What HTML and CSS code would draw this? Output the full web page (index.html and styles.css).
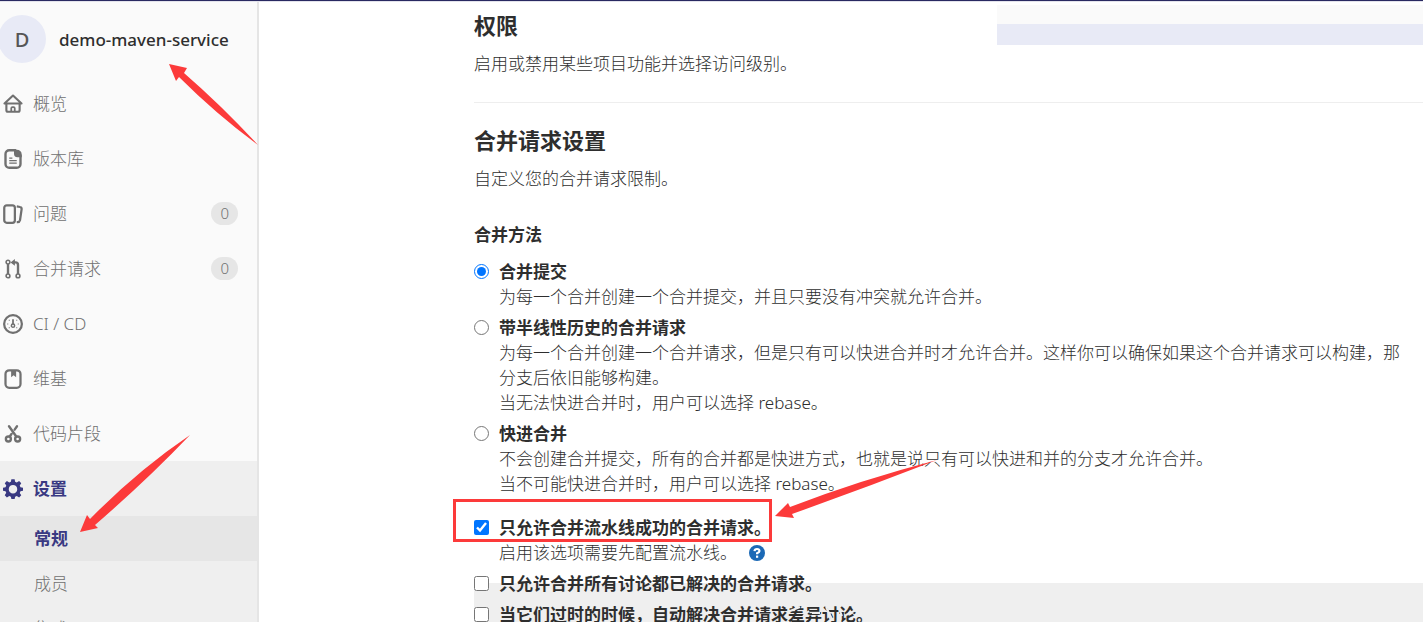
FILE: index.html
```html
<!DOCTYPE html>
<html lang="zh-CN">
<head>
<meta charset="utf-8">
<title>demo-maven-service · 设置</title>
<link rel="stylesheet" href="styles.css">
</head>
<body>
<header class="topbar"></header>
<div class="page">
  <aside class="sidebar">
    <a class="project" href="#"><span class="avatar">D</span><span class="project-name">demo-maven-service</span></a>
    <nav>
      <ul class="menu">
        <li><a class="item" href="#"><svg class="icon" viewBox="0 0 16 16"><path fill="none" stroke="currentColor" stroke-width="1.700" stroke-linejoin="round" d="M8 1.200 1.200 7.600h13.600zM2.700 7.800V13a1.200 1.200 0 0 0 1.200 1.200h8.200a1.200 1.200 0 0 0 1.200-1.200V7.800"/><path fill="none" stroke="currentColor" stroke-width="1.400" d="M6.600 14v-2.600a1 1 0 0 1 1-1h.8a1 1 0 0 1 1 1V14"/></svg><span>概览</span></a></li>
        <li><a class="item" href="#"><svg class="icon" viewBox="0 0 16 16"><path fill="none" stroke="currentColor" stroke-width="1.900" d="M5 1h4.800L14 5.200V12a3 3 0 0 1-3 3H5a3 3 0 0 1-3-3V4a3 3 0 0 1 3-3z"/><path d="M8.800.5H11A4 4 0 0 1 15 4.500v2h-3.500A2.700 2.700 0 0 1 8.800 3.800z"/><path d="M5 6.700h2.500v1H5zm0 2h6v1H5zm0 2h6v1H5z"/></svg><span>版本库</span></a></li>
        <li><a class="item" href="#"><svg class="icon" viewBox="0 0 16 16"><path fill="none" stroke="currentColor" stroke-width="1.800" d="M3 1h4.500a2 2 0 0 1 2 2v10a2 2 0 0 1-2 2H3a2 2 0 0 1-2-2V3a2 2 0 0 1 2-2zM11 1.900l2.600.5a1.500 1.500 0 0 1 1.300 1.700L13.600 13a2 2 0 0 1-2 1.500H11"/></svg><span>问题</span><span class="count">0</span></a></li>
        <li><a class="item" href="#"><svg class="icon" viewBox="0 0 16 16"><g fill="none" stroke="currentColor"><g stroke-width="1.300"><circle cx="4" cy="2.500" r="1.500"/><circle cx="4" cy="13.500" r="1.500"/><circle cx="12" cy="13.500" r="1.500"/></g><path stroke-width="1.900" d="M4 4v8M8 2.700h2q2 0 2 2V12"/></g><path d="M6 2.700 9.500 0v5.400z"/></svg><span>合并请求</span><span class="count">0</span></a></li>
        <li><a class="item" href="#"><svg class="icon" viewBox="0 0 16 16"><circle cx="8" cy="8" r="7.100" fill="none" stroke="currentColor" stroke-width="1.800"/><circle cx="8" cy="9.300" r="1.300" fill="none" stroke="currentColor" stroke-width="1.200"/><path d="M7.300 4.200h1.400v4H7.300zM3.400 7.600h.8v.8h-.8zm8.400 0h.8v.8h-.8zM4.600 4.600h.8v.8h-.8zm6 0h.8v.8h-.8zM4.600 10.600h.8v.8h-.8zm6 0h.8v.8h-.8z"/></svg><span>CI / CD</span></a></li>
        <li><a class="item" href="#"><svg class="icon" viewBox="0 0 16 16"><rect x="2" y="1" width="12" height="14" rx="3" fill="none" stroke="currentColor" stroke-width="1.800"/><path d="M6.500 1h4v5.500l-2-1.500-2 1.500z"/></svg><span>维基</span></a></li>
        <li><a class="item" href="#"><svg class="icon" viewBox="0 0 16 16"><g fill="none" stroke="currentColor" stroke-width="1.900"><circle cx="4.300" cy="12" r="2"/><circle cx="11.700" cy="12" r="2"/><path stroke-linecap="round" d="M4.800 1.800 10.600 10M11.200 1.800 9.300 4.500M5.400 10l1.400-2"/></g></svg><span>代码片段</span></a></li>
        <li class="group">
          <a class="item current" href="#"><svg class="icon" viewBox="0 0 16 16"><path fill-rule="evenodd" d="M6.700.2h2.600l.4 2 1.300.6 1.900-1.200 1.700 1.700-1.200 1.900.6 1.300 2 .4v2.400l-2 .5-.6 1.300 1.200 1.800-1.700 1.800-1.900-1.200-1.300.6-.4 1.900H6.700l-.4-1.900-1.300-.6-1.900 1.200-1.700-1.800L2.600 11 2 9.800l-2-.5V6.900l2-.4.6-1.300-1.200-1.900 1.700-1.700L5 2.800l1.300-.6zM8 4.700a3.400 3.400 0 1 0 0 6.800 3.400 3.400 0 0 0 0-6.800z"/></svg><span>设置</span></a>
          <ul class="submenu">
            <li><a class="subitem selected" href="#">常规</a></li>
            <li><a class="subitem" href="#">成员</a></li>
            <li><a class="subitem" href="#">集成</a></li>
          </ul>
        </li>
      </ul>
    </nav>
  </aside>
  <main class="content">
    <div class="search-strip"></div>
    <section class="section">
      <h2>权限</h2>
      <p>启用或禁用某些项目功能并选择访问级别。</p>
    </section>
    <section class="section merge">
      <h2>合并请求设置</h2>
      <p>自定义您的合并请求限制。</p>
      <form>
        <fieldset class="methods">
          <legend>合并方法</legend>
          <div class="option"><input type="radio" name="method" id="m1" checked><div><label for="m1">合并提交</label><p>为每一个合并创建一个合并提交，并且只要没有冲突就允许合并。</p></div></div>
          <div class="option"><input type="radio" name="method" id="m2"><div><label for="m2">带半线性历史的合并请求</label><p>为每一个合并创建一个合并请求，但是只有可以快进合并时才允许合并。这样你可以确保如果这个合并请求可以构建，那<br>分支后依旧能够构建。<br>当无法快进合并时，用户可以选择 rebase。</p></div></div>
          <div class="option"><input type="radio" name="method" id="m3"><div><label for="m3">快进合并</label><p>不会创建合并提交，所有的合并都是快进方式，也就是说只有可以快进和并的分支才允许合并。<br>当不可能快进合并时，用户可以选择 rebase。</p></div></div>
        </fieldset>
        <div class="checks">
          <div class="option"><input type="checkbox" id="c1" checked><div><label for="c1">只允许合并流水线成功的合并请求。</label><p class="with-help">启用该选项需要先配置流水线。<a class="help" href="#" aria-label="帮助"><svg viewBox="0 0 16 16"><circle cx="8" cy="8" r="8" fill="#1b69b6"/><path d="M5.500 6.200Q5.700 4 8 4t2.500 2Q10.500 7.200 8.100 8.200V9.300" fill="none" stroke="#fff" stroke-width="2.200"/><rect x="7" y="10.600" width="2.200" height="2.200" fill="#fff"/></svg></a></p></div></div>
          <div class="option"><input type="checkbox" id="c2"><div><label for="c2">只允许合并所有讨论都已解决的合并请求。</label></div></div>
          <div class="option"><input type="checkbox" id="c3"><div><label for="c3">当它们过时的时候，自动解决合并请求差异讨论。</label></div></div>
        </div>
      </form>
    </section>
  </main>
</div>
<svg class="marks" width="1423" height="622" viewBox="0 0 1423 622" aria-hidden="true">
  <path d="M169 64 187 68 184 73Q222 106 258 145Q216 114 179 77L176 81z"/>
  <path d="M80 532 87 515 90 519Q137 471 190 435Q147 480 95 525L98 528z"/>
  <path d="M775 516 788 503 790 507Q860 480 937 460Q865 488 792 514L794 518z"/>
  <rect x="454.500" y="500.500" width="316" height="40" fill="none" stroke="#fc3a3a" stroke-width="3"/>
  <path d="M790 611 800 607M803 616 809 611M812 613H820M826 607 832 619M838 606 842 616M846 615 856 610" fill="none" stroke="#efefef" stroke-width="2"/>
</svg>
</body>
</html>
```
FILE: styles.css
```css
* { box-sizing: border-box; }
body {
  margin: 0;
  height: 100vh;
  overflow: hidden;
  position: relative;
  display: flex;
  flex-direction: column;
  background: #fff;
  color: #2e2e2e;
  font: 300 17px/25px "Noto Sans", "Noto Sans CJK SC", sans-serif;
}
a { color: inherit; text-decoration: none; }
ul { list-style: none; margin: 0; padding: 0; }
p, h2 { margin: 0; }
.topbar { flex: none; height: 2px; background: #292961; border-bottom: 1px solid #e3e3ec; }
.page { flex: 1; min-height: 0; display: flex; }

.sidebar {
  flex: none;
  width: 259px;
  overflow: hidden;
  background: #fafafa;
  border-right: 2px solid #e5e5e5;
  color: #707070;
}
.project { display: flex; align-items: center; gap: 13px; height: 74px; color: #2e2e2e; font-weight: 500; }
.avatar {
  width: 48px;
  height: 48px;
  margin-left: -2px;
  border-radius: 50%;
  background: #e8eaf6;
  color: #555;
  display: grid;
  place-items: center;
  font-size: 20px;
}
.item { display: flex; align-items: center; gap: 10px; height: 55px; padding: 0 19px 0 3px; }
.icon { width: 20px; height: 20px; flex: none; fill: currentColor; }
.count {
  margin-left: auto;
  padding: 0 9px;
  border-radius: 12px;
  background: #e6e6e6;
  font-size: 15px;
  line-height: 23px;
}
.group { background: #efefef; }
.current, .selected { color: #393982; font-weight: 700; }
.subitem { display: block; padding: 10px 34px; }
.selected { background: #e6e6e6; }

.content { flex: 1; min-width: 0; padding-left: 215px; overflow: hidden; position: relative; white-space: nowrap; }
.search-strip {
  position: absolute;
  top: 3px;
  right: 0;
  width: 426px;
  height: 40px;
  background: #e8eaf6;
  border-top: 19px solid #fafafa;
}
.section { padding: 7px 0 26px; border-bottom: 1px solid #eee; }
.section h2 { font-size: 22px; line-height: 33px; margin-bottom: 9px; }
.merge { padding-top: 21px; }
fieldset { border: 0; margin: 0; padding: 0; min-width: 0; }
legend { padding: 0; font-weight: 700; margin-bottom: 12px; }
.methods { margin-top: 31px; }
.option { display: flex; gap: 10px; margin-bottom: 6px; }
.option input { width: 15px; height: 15px; margin: 5px 0 0; flex: none; accent-color: #0075ff; }
.option label { display: block; font-weight: 700; }
.checks { margin-top: 13px; background: linear-gradient(#fff 68px, #efefef 68px); }
.with-help { display: flex; align-items: center; gap: 12px; }
.help { width: 16px; height: 16px; display: flex; }

.marks { position: absolute; top: 0; left: 0; fill: #fc3a3a; pointer-events: none; }
```
